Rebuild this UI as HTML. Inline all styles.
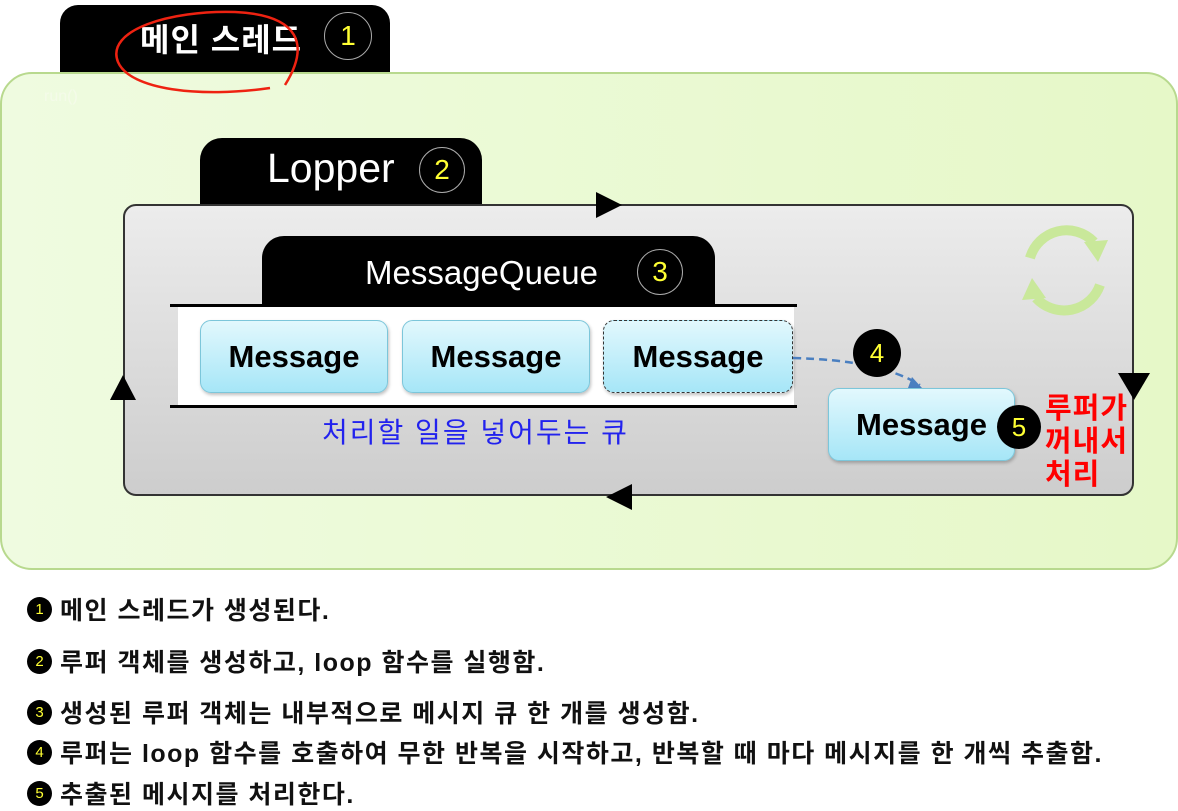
<!DOCTYPE html>
<html><head><meta charset="utf-8"><style>
*{margin:0;padding:0;box-sizing:border-box}
body{width:1178px;height:810px;background:#fff;position:relative;overflow:hidden;font-family:"Liberation Sans","Noto Sans CJK KR",sans-serif}
.a{position:absolute}
.tab{position:absolute;background:#000;border-radius:22px 22px 0 0}
.t{position:absolute;color:#fff;white-space:nowrap}
.circ{position:absolute;border:1.5px solid #aaa;border-radius:50%;color:#ffff33;display:flex;align-items:center;justify-content:center;font-size:28px;background:#000}
.bc{position:absolute;background:#000;border-radius:50%;color:#ffff33;display:flex;align-items:center;justify-content:center}
.msg{position:absolute;height:73px;border-radius:11px;background:linear-gradient(#e2f8fd,#a6e6f7);border:1.5px solid #7cc6da;display:flex;align-items:center;justify-content:center;font-weight:bold;font-size:31px;color:#000;box-shadow:1px 2px 3px rgba(0,0,0,.25)}
.li{position:absolute;left:60px;font-size:25px;letter-spacing:1.5px;font-weight:bold;color:#111;white-space:nowrap}
.lb{position:absolute;left:27px;width:25px;height:25px;font-size:15px}
</style></head><body>
<div class="tab" style="left:60px;top:5px;width:330px;height:75px;border-radius:18px 18px 0 0"></div>
<div class="t" style="left:140px;top:15px;font-size:32px;font-weight:bold;letter-spacing:1px">메인 스레드</div>
<div class="circ" style="left:324px;top:12px;width:48px;height:48px">1</div>
<div class="a" style="left:0;top:72px;width:1178px;height:498px;border-radius:32px;background:linear-gradient(90deg,#effbe0,#e6f8c8);border:2px solid #b8d98e"></div>
<div class="t" style="left:44px;top:88px;font-size:16px;color:#f4fbe9">run()</div>
<div class="tab" style="left:200px;top:138px;width:282px;height:68px"></div>
<div class="t" style="left:267px;top:145px;font-size:41px">Lopper</div>
<div class="circ" style="left:419px;top:147px;width:46px;height:46px">2</div>
<div class="a" style="left:123px;top:204px;width:1011px;height:292px;border-radius:13px;background:linear-gradient(#ececec,#cdcdcd);border:2px solid #333"></div>
<div class="tab" style="left:262px;top:236px;width:453px;height:70px"></div>
<div class="t" style="left:365px;top:254px;font-size:33px">MessageQueue</div>
<div class="circ" style="left:637px;top:249px;width:46px;height:46px">3</div>
<div class="a" style="left:178px;top:307px;width:616px;height:99px;background:#fff"></div>
<div class="a" style="left:170px;top:304px;width:627px;height:3px;background:#000"></div>
<div class="a" style="left:170px;top:405px;width:627px;height:3px;background:#000"></div>
<div class="msg" style="left:200px;top:320px;width:188px">Message</div>
<div class="msg" style="left:402px;top:320px;width:188px">Message</div>
<div class="msg" style="left:603px;top:320px;width:190px;border:1.5px dashed #333">Message</div>
<div class="t" style="left:322px;top:411px;font-size:28px;letter-spacing:2px;color:#2222ee">처리할 일을 넣어두는 큐</div>
<svg class="a" style="left:0;top:0" width="1178" height="810">
<path d="M793 358 Q880 360 920 385" fill="none" stroke="#4a7fc0" stroke-width="2.5" stroke-dasharray="8 5"/>
<path d="M912 377 L922 388 L908 388Z" fill="#4a7fc0"/>
<path d="M596 192 L622 205 L596 218Z" fill="#000"/>
<path d="M632 484 L606 497 L632 510Z" fill="#000"/>
<path d="M1118 373 L1150 373 L1134 400Z" fill="#000"/>
<path d="M110 400 L136 400 L123 375Z" fill="#000"/>
<g fill="none" stroke="#c9e89a" stroke-width="10">
<path d="M1030 258 A38 38 0 0 1 1094 242"/>
<path d="M1100 285 A38 38 0 0 1 1036 298"/>
</g>
<path d="M1084 242 L1108 240 L1098 262Z" fill="#c9e89a"/>
<path d="M1046 298 L1022 300 L1032 278Z" fill="#c9e89a"/>
<path d="M270 88 C200 98 130 90 118 62 C105 30 170 10 235 12 C300 15 310 45 285 85" fill="none" stroke="#e21" stroke-width="2.5"/>
</svg>
<div class="bc" style="left:853px;top:329px;width:48px;height:48px;font-size:26px">4</div>
<div class="msg" style="left:828px;top:388px;width:187px">Message</div>
<div class="bc" style="left:997px;top:405px;width:44px;height:44px;font-size:26px">5</div>
<div class="a" style="left:1045px;top:393px;font-size:29px;letter-spacing:1px;font-weight:bold;color:#f00;line-height:33px">루퍼가<br>꺼내서<br>처리</div>
<div class="bc lb" style="top:597px">1</div><div class="li" style="top:591px">메인 스레드가 생성된다.</div>
<div class="bc lb" style="top:649px">2</div><div class="li" style="top:643px">루퍼 객체를 생성하고, loop 함수를 실행함.</div>
<div class="bc lb" style="top:700px">3</div><div class="li" style="top:694px">생성된 루퍼 객체는 내부적으로 메시지 큐 한 개를 생성함.</div>
<div class="bc lb" style="top:740px">4</div><div class="li" style="top:734px">루퍼는 loop 함수를 호출하여 무한 반복을 시작하고, 반복할 때 마다 메시지를 한 개씩 추출함.</div>
<div class="bc lb" style="top:781px">5</div><div class="li" style="top:775px">추출된 메시지를 처리한다.</div>
</body></html>
